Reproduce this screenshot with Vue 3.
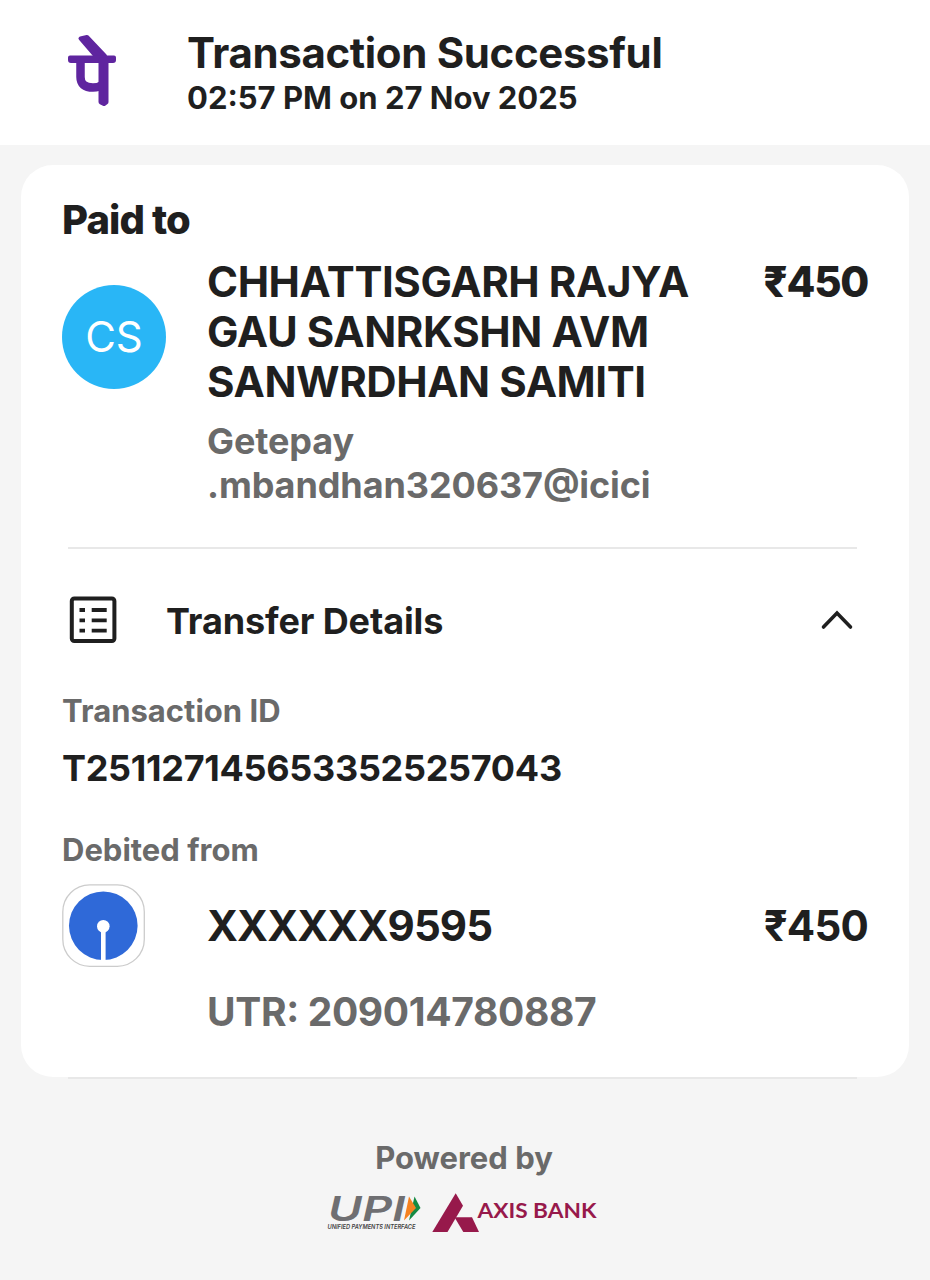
<script setup>
const payee = ['CHHATTISGARH RAJYA', 'GAU SANRKSHN AVM', 'SANWRDHAN SAMITI']
const handle = ['Getepay', '.mbandhan320637@icici']
const amount = '₹450'
</script>

<template>
  <div class="screen">
    <header class="header">
      <svg class="phonepe" viewBox="0 0 52 74" width="52" height="74">
        <g fill="#5f259f" stroke="#5f259f" stroke-linejoin="round">
          <path d="M13.500 4.500L20 3L38 22L32 26Z" stroke-width="4" />
          <path d="M3 23.500H47V26Q47 27 46 27H4Q3 27 3 26Z" stroke-width="4" />
          <path d="M12.500 26V43Q12.500 53.500 25 53.500Q31 53.500 36 50" fill="none" stroke-width="8.500" transform="translate(1 0)" />
          <path d="M34 26H39V68L37 69.500L34 68Z" stroke-width="5" />
        </g>
      </svg>
      <div>
        <h1 class="title">Transaction Successful</h1>
        <p class="time">02:57 PM on 27 Nov 2025</p>
      </div>
    </header>

    <main class="card">
      <h2 class="paid">Paid to</h2>
      <section class="payee">
        <div class="avatar">CS</div>
        <div class="who">
          <div v-for="l in payee" :key="l" class="name">{{ l }}</div>
          <div class="handles">
            <div v-for="l in handle" :key="l" class="handle">{{ l }}</div>
          </div>
        </div>
        <div class="amount heavy">{{ amount }}</div>
      </section>
      <hr class="rule" />
      <section class="details">
        <svg viewBox="0 0 50 48" width="50" height="48" fill="none" stroke="#1f1f1f">
          <rect x="3.800" y="2.500" width="42.600" height="42.600" rx="2.500" stroke-width="4" />
          <path d="M11.500 14h5.500M11.500 24.300h5.500M11.500 34.600h5.500M23.700 14h15M23.700 24.300h15M23.700 34.600h15" stroke-width="3.800" />
        </svg>
        <h3 class="details-title">Transfer Details</h3>
        <svg class="chevron" viewBox="0 0 34 22" width="34" height="22" fill="none" stroke="#1f1f1f" stroke-width="3.600" stroke-linecap="round">
          <path d="M3.500 18L17 4L30.500 18" />
        </svg>
      </section>
      <div class="label txn">Transaction ID</div>
      <div class="txn-id">T2511271456533525257043</div>
      <div class="label debited">Debited from</div>
      <section class="account">
        <svg viewBox="0 0 84 84" width="84" height="84">
          <rect x=".8" y=".8" width="81.500" height="81.500" rx="27" fill="#fff" stroke="#ccc" stroke-width="1.300" />
          <circle cx="41.300" cy="41.700" r="34.300" fill="#2f69d8" />
          <circle cx="41.300" cy="42.300" r="6.300" fill="#fff" />
          <path d="M41.300 42V77" stroke="#fff" stroke-width="4.600" />
        </svg>
        <div class="number">XXXXXX9595</div>
        <div class="amount">{{ amount }}</div>
      </section>
      <div class="utr">UTR: 209014780887</div>
    </main>
    <hr class="rule end" />

    <footer>
      <div class="powered">Powered by</div>
      <svg class="brands" viewBox="0 0 276 46" width="276" height="46">
        <text x="3" y="31" textLength="77" lengthAdjust="spacingAndGlyphs" class="upi">UPI</text>
        <path d="M89.500 6.500L95.500 18L84 30.500Z" fill="#158a43" />
        <path d="M84 6.500L91 18L79 30.500Z" fill="#f58220" />
        <text x="2.500" y="39" textLength="88" lengthAdjust="spacingAndGlyphs" class="upi-sub">UNIFIED PAYMENTS INTERFACE</text>
        <path d="M130.700 3.300L138 15.700L122.500 42H107.300Z" fill="#97194b" />
        <path d="M129.500 27.300H147L154 42H138.300Z" fill="#97194b" />
        <text x="152.500" y="27.500" textLength="119" lengthAdjust="spacingAndGlyphs" class="axis">AXIS BANK</text>
      </svg>
    </footer>
  </div>
</template>

<style>
body { margin: 0; background: #f5f5f5; }
</style>

<style scoped>
.screen { width: 930px; height: 1280px; background: #f5f5f5; color: #1f1f1f; font-family: Inter, sans-serif; font-weight: 700; overflow: hidden; white-space: nowrap; }
h1, h2, h3, p { margin: 0; font-weight: inherit; }
svg { display: block; flex: none; overflow: visible; }
.header { height: 145px; background: #fff; display: flex; align-items: flex-start; }
.phonepe { margin: 34px 68px 0 67px; }
.title { font-size: 42px; line-height: 50px; margin-top: 28px; letter-spacing: -.36px; }
.time { font-size: 31px; line-height: 40px; font-feature-settings: "case"; }
.card { box-sizing: border-box; width: 888px; height: 912px; margin: 20px 0 0 21px; padding: 30px 41px 0; background: #fff; border-radius: 32px; }
.paid { font-size: 40px; line-height: 50px; font-weight: 800; letter-spacing: -.9px; }
.payee { display: flex; align-items: flex-start; margin-top: 12px; height: 290px; }
.avatar { width: 104px; height: 104px; margin-top: 28px; border-radius: 50%; background: #29b6f6; color: #fff; font: 400 42px/104px Inter, sans-serif; text-align: center; flex: none; }
.who { margin-left: 41px; flex: 1; }
.name { font-size: 42px; line-height: 50px; letter-spacing: -.42px; }
.handles { margin-top: 12px; }
.handle { font-size: 36px; line-height: 44px; color: #6a6a6a; letter-spacing: -.1px; font-feature-settings: "case"; }
.amount { font-size: 42px; line-height: 50px; margin-left: auto; letter-spacing: -.8px; }
.heavy { font-weight: 800; letter-spacing: -1.3px; }
.rule { border: 0; height: 2px; background: #e8e8e8; margin: 0 11px 0 6px; }
.details { display: flex; align-items: center; margin: 46px 14px 0 6px; height: 50px; }
.details-title { font-size: 36px; line-height: 44px; margin: 2px 0 0 48px; letter-spacing: -.12px; }
.chevron { margin-left: auto; }
.label { font-size: 31px; line-height: 40px; color: #6a6a6a; }
.txn { margin-top: 46px; }
.txn-id { font-size: 36px; line-height: 44px; margin-top: 15px; letter-spacing: -.3px; }
.debited { margin-top: 40px; }
.account { display: flex; align-items: center; margin-top: 14px; height: 84px; }
.number { font-size: 42px; line-height: 50px; margin-left: 61px; letter-spacing: -.92px; }
.utr { font-size: 39px; line-height: 50px; color: #6a6a6a; margin: 19px 0 0 145px; letter-spacing: -.35px; font-feature-settings: "case"; }
.end { width: 789px; margin: 0 0 0 68px; }
.powered { font-size: 31px; line-height: 40px; color: #6a6a6a; text-align: center; margin: 59px 2px 0 0; }
.brands { margin: 12px 0 0 325px; }
.upi { font: italic 600 34px Inter, sans-serif; fill: #6f6f72; }
.upi-sub { font: italic 600 6px Inter, sans-serif; fill: #444; }
.axis { font: 700 20px Lato, sans-serif; fill: #97194b; }
</style>
